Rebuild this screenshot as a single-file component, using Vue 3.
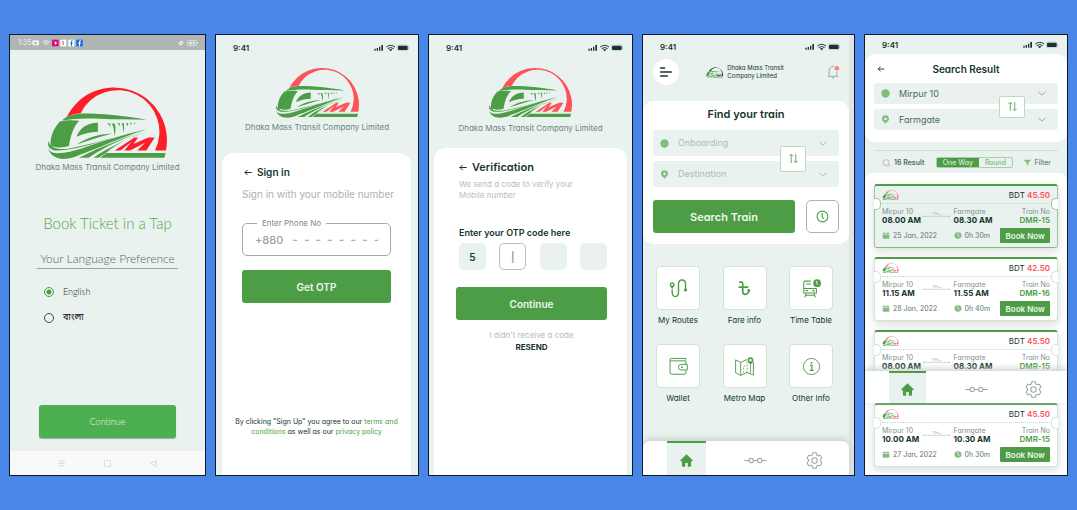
<script setup>
import { ref } from 'vue'

const language = ref('en')
const tripType = ref('one')
const otp = ref(['5', '', '', ''])

const services = [
  { label: 'My Routes', icon: 'i-route' },
  { label: 'Fare info', icon: 'i-taka' },
  { label: 'Time Table', icon: 'i-bus' },
  { label: 'Wallet', icon: 'i-wallet' },
  { label: 'Metro Map', icon: 'i-map' },
  { label: 'Other Info', icon: 'i-info' }
]

const tickets = [
  { fare: '45.50', from: '08.00 AM', to: '08.30 AM', train: 'DMR-15', date: '25 Jan, 2022', time: '0h 30m', active: true },
  { fare: '42.50', from: '11.15 AM', to: '11.55 AM', train: 'DMR-16', date: '28 Jan, 2022', time: '0h 40m' },
  { fare: '45.50', from: '08.00 AM', to: '08.30 AM', train: 'DMR-15', date: '25 Jan, 2022', time: '0h 30m' },
  { fare: '45.50', from: '10.00 AM', to: '10.30 AM', train: 'DMR-15', date: '27 Jan, 2022', time: '0h 30m' }
]
</script>

<template>
  <svg class="sprite" aria-hidden="true">
    <symbol id="logo" viewBox="144 182 358 224">
      <path fill="var(--arc)" d="M200 275A159 159 0 0 1 499 375H466A124 124 0 0 0 242 263C224 264 211 268 200 275z" />
      <g fill="var(--train)">
        <path d="M180 288C160 309 150 335 152 361C168 368 191 367 207 362C211 335 219 305 238 286C217 283 197 284 180 288z" />
        <path d="M186 285C202 270 222 264 252 264C310 264 385 272 441 283C390 282 345 283 300 280C260 277 220 279 186 285z" />
        <path d="M230 334C239 308 262 293 294 292V319C270 320 249 325 230 334z" />
        <path d="M321 294L331 294L331 306Q329 296 321 294zM335 294L345 295Q350 315 343 332Q344 303 335 294zM352 293L360 293V304Q359 296 352 293zM365 293L372 293Q375 310 371 323Q371 301 365 293zM378 293L385 293V302zM390 292L395 292V300zM402 292L406 292V298z" />
        <path d="M231 357C262 337 293 326 338 324C305 332 266 345 231 357z" />
        <path d="M146 347C141 361 147 371 165 375C225 379 330 337 440 310C350 335 255 361 210 369C180 374 150 371 146 347z" />
        <path d="M144 365C149 386 166 384 192 382C238 376 306 343 440 311C363 337 286 371 245 386C205 408 151 408 144 365z" />
        <path d="M440 313C375 338 302 364 237 397L266 397C318 362 370 340 440 313z" />
        <path d="M440 317C392 338 325 364 281 397L296 397L319 382C350 354 390 337 440 317z" />
        <path d="M320 383H498L494 397H301z" />
      </g>
      <path fill="var(--arc)" d="M345 375L404 336H415L401 356L446 336H465L440 375H413L436 352L391 375H374L395 349L362 375z" />
    </symbol>
    <symbol id="i-status" viewBox="0 0 108 24">
      <path fill="currentColor" d="M1 14h4v6H1zM8 12h4v8H8zM15 8h4v12h-4zM22 3h5v17h-5z" />
      <path fill="none" stroke="currentColor" stroke-width="3" d="M37 9Q50 -1 63 9M41 14Q50 7 59 14" />
      <path fill="currentColor" d="M45 17Q50 13 55 17L50 22z" />
      <rect x="70" y="3" width="33" height="17" rx="5" fill="none" stroke="currentColor" opacity=".5" />
      <rect x="72" y="5" width="29" height="13" rx="3" fill="currentColor" />
      <path fill="currentColor" opacity=".5" d="M104 9q4 3 0 6z" />
    </symbol>
    <symbol id="i-back" viewBox="0 0 24 20">
      <path fill="none" stroke="currentColor" stroke-width="3" stroke-linecap="round" stroke-linejoin="round" d="M22 10H3M10 3L3 10l7 7" />
    </symbol>
    <symbol id="i-chevron" viewBox="0 0 20 12">
      <path fill="none" stroke="currentColor" stroke-width="2.4" d="M1 2l9 8 9-8" />
    </symbol>
    <symbol id="i-dot" viewBox="0 0 28 28"><circle cx="14" cy="14" r="13" fill="currentColor" /></symbol>
    <symbol id="i-pin" viewBox="0 0 28 28">
      <path fill="currentColor" fill-rule="evenodd" d="M14 1a11 11 0 0 1 11 11c0 7-7 11-11 15C10 23 3 19 3 12A11 11 0 0 1 14 1zm0 7a4 4 0 1 0 0 8 4 4 0 0 0 0-8z" />
    </symbol>
    <symbol id="i-swap" viewBox="0 0 34 34">
      <path fill="none" stroke="currentColor" stroke-width="3" stroke-linejoin="round" d="M10 31V4M4 10l6-6 6 6M24 3v27M18 24l6 6 6-6" />
    </symbol>
    <symbol id="i-clock" viewBox="0 0 34 34">
      <circle cx="17" cy="17" r="14" fill="none" stroke="currentColor" stroke-width="3" />
      <path fill="none" stroke="currentColor" stroke-width="3" d="M16 8v9l4 6" />
    </symbol>
    <symbol id="i-bell" viewBox="0 0 38 42">
      <path fill="none" stroke="#93a09c" stroke-width="2.5" d="M2 34h31M6 34V18C6 9 11 5 18 5M29 34V20M14 37q4 4 8 0M18 5V1" />
      <circle cx="29" cy="10" r="7" fill="#ff7c80" />
    </symbol>
    <symbol id="i-route" viewBox="0 0 54 54">
      <path fill="currentColor" fill-rule="evenodd" d="M9 9a7 7 0 0 1 7 7c0 5-5 8-7 13-2-5-7-8-7-13a7 7 0 0 1 7-7zm0 4a3 3 0 1 0 0 6 3 3 0 0 0 0-6z" />
      <path fill="none" stroke="currentColor" stroke-width="4" d="M9 30v8c0 6 2 12 9 12s9-6 9-12V14c0-7 3-11 10-11s10 5 10 11v15" />
      <circle cx="47" cy="31" r="4.500" fill="currentColor" />
    </symbol>
    <symbol id="i-taka" viewBox="0 0 54 54">
      <path fill="none" stroke="currentColor" stroke-width="5" stroke-linecap="round" d="M14 9c6-2 8 1 8 6v22c0 8 11 8 15 3 2-3 3-7 2-9M12 23h24" />
      <circle cx="39" cy="33" r="4" fill="currentColor" />
    </symbol>
    <symbol id="i-bus" viewBox="0 0 54 54">
      <path fill="none" stroke="currentColor" stroke-width="3" d="M25 6H9q-4 0-4 5v29h36V27M5 27h36M11 14h15M12 40l-4 12M34 40l4 12M10 46h26M10 33h7M29 33h7" />
      <circle cx="43" cy="12" r="11" fill="currentColor" />
      <path fill="none" stroke="#fff" stroke-width="2.500" d="M42 5v8l4 4" />
    </symbol>
    <symbol id="i-wallet" viewBox="0 0 54 54">
      <path fill="none" stroke="currentColor" stroke-width="2.800" stroke-linejoin="round" d="M48 20v-9H7q-4 0-4-3 0-4 4-4h41v4M3 8v37q0 4 4 4h37q4 0 4-4v-7M34 21h18v16H34q-7 0-7-8t7-8z" />
      <circle cx="37" cy="29" r="2.500" fill="currentColor" />
    </symbol>
    <symbol id="i-map" viewBox="0 0 60 60">
      <path fill="none" stroke="currentColor" stroke-width="3" stroke-linejoin="round" d="M2 9l16 8 20-9M58 15v42l-20-8-20 9-16-8V9M18 17v41" />
      <path fill="none" stroke="currentColor" stroke-width="2.500" stroke-dasharray="6 4" d="M38 14v34M27 50q2-8 0-14t5-9" />
      <path fill="currentColor" fill-rule="evenodd" d="M49 1a9 9 0 0 1 9 9c0 6-6 9-9 16-3-7-9-10-9-16a9 9 0 0 1 9-9zm0 5a4 4 0 1 0 0 8 4 4 0 0 0 0-8z" />
      <path fill="none" stroke="currentColor" stroke-width="2.500" d="M49 25v27" />
    </symbol>
    <symbol id="i-info" viewBox="0 0 54 54">
      <circle cx="27" cy="27" r="23" fill="none" stroke="currentColor" stroke-width="2.600" />
      <path fill="none" stroke="currentColor" stroke-width="3.500" d="M23 24h5v14M22 38h11" />
      <circle cx="27" cy="17" r="2.500" fill="currentColor" />
    </symbol>
    <symbol id="i-home" viewBox="0 0 40 40">
      <path fill="currentColor" d="M20 1l19 18q1 3-2 3h-3v14q0 3-3 3h-7V28h-8v11H9q-3 0-3-3V22H3q-3 0-2-3z" />
    </symbol>
    <symbol id="i-line" viewBox="0 0 68 20">
      <path fill="none" stroke="currentColor" stroke-width="3" d="M1 10h14M28 10h12M53 10h14" />
      <circle cx="21.500" cy="10" r="6.500" fill="none" stroke="currentColor" stroke-width="3" />
      <circle cx="46.500" cy="10" r="6.500" fill="none" stroke="currentColor" stroke-width="3" />
    </symbol>
    <symbol id="i-gear" viewBox="2 2 20 20">
      <g fill="none" stroke="currentColor" stroke-width="1.200">
        <path d="M9.594 3.940c.09-.542.56-.94 1.110-.94h2.593c.55 0 1.020.398 1.110.94l.213 1.281c.063.374.313.686.645.87.074.04.147.083.22.127.325.196.72.257 1.075.124l1.217-.456a1.125 1.125 0 0 1 1.370.49l1.296 2.247a1.125 1.125 0 0 1-.26 1.431l-1.003.827c-.293.241-.438.613-.43.992a7.723 7.723 0 0 1 0 .255c-.008.378.137.75.43.991l1.004.827c.424.35.534.955.26 1.430l-1.298 2.247a1.125 1.125 0 0 1-1.369.491l-1.217-.456c-.355-.133-.75-.072-1.076.124a6.470 6.470 0 0 1-.22.128c-.331.183-.581.495-.644.869l-.213 1.281c-.09.543-.56.94-1.110.94h-2.594c-.55 0-1.019-.398-1.110-.94l-.213-1.281c-.062-.374-.312-.686-.644-.87a6.520 6.520 0 0 1-.22-.127c-.325-.196-.72-.257-1.076-.124l-1.217.456a1.125 1.125 0 0 1-1.369-.49l-1.297-2.247a1.125 1.125 0 0 1 .26-1.431l1.004-.827c.292-.24.437-.613.43-.991a6.932 6.932 0 0 1 0-.255c.007-.38-.138-.751-.43-.992l-1.004-.827a1.125 1.125 0 0 1-.26-1.430l1.297-2.247a1.125 1.125 0 0 1 1.370-.491l1.216.456c.356.133.751.072 1.076-.124.072-.044.146-.086.22-.128.332-.183.582-.495.644-.869l.214-1.280Z" />
        <circle cx="12" cy="12" r="3.200" />
      </g>
    </symbol>
    <symbol id="i-search" viewBox="0 0 28 24">
      <circle cx="13" cy="11" r="9.500" fill="none" stroke="currentColor" stroke-width="2" />
      <path stroke="currentColor" stroke-width="2" d="M20 18l6 5" />
    </symbol>
    <symbol id="i-filter" viewBox="0 0 22 22">
      <path fill="currentColor" d="M2 2h18q2 1 1 3l-7 7v8l-6-3v-5L1 5q-1-2 1-3z" />
    </symbol>
    <symbol id="i-cal" viewBox="0 0 24 20">
      <path fill="currentColor" d="M2 3h3V0h3v3h8V0h3v3h3v3H2zM2 8h20v9q0 3-3 3H5q-3 0-3-3z" />
    </symbol>
    <symbol id="i-time" viewBox="0 0 22 20">
      <ellipse cx="11" cy="10" rx="10" ry="9" fill="currentColor" />
      <path fill="none" stroke="#fff" stroke-width="2" d="M11 4v6l4 4" />
    </symbol>
    <symbol id="i-trip" viewBox="0 0 82 18">
      <path fill="none" stroke="#a5aead" stroke-width="1.500" d="M2 16h78M28 5l12 0 10 6h7M30 9h16" />
      <circle cx="2" cy="16" r="2" fill="#a5aead" /><circle cx="80" cy="16" r="2" fill="#a5aead" />
    </symbol>
  </svg>

  <main class="board">
    <!-- Language choice -->
    <section class="phone welcome">
      <div class="android-bar">
        <span>1:35</span>
        <svg class="bar-apps" viewBox="0 0 156 24">
          <rect x="1" y="4" width="20" height="15" rx="3" fill="#edf1ef" /><path fill="#8e9794" d="M8 8l7 4-7 4z" />
          <path fill="none" stroke="#edf1ef" stroke-width="3" d="M31 9q11-8 22 0M35 14q7-5 14 0" /><circle cx="42" cy="18" r="2" fill="#edf1ef" />
          <rect x="60" y="2" width="20" height="20" fill="#d5127a" /><path fill="#fff" d="M65 6l11 6-7 5v-6z" />
          <rect x="85" y="2" width="18" height="20" fill="#fff" /><path fill="#e9682b" d="M90 6l4 2 3 6-3 4-3-1 2-4z" /><path fill="#7b2c84" d="M90 6l3 1v4z" />
          <rect x="109" y="2" width="18" height="20" fill="#fff" /><path fill="#1b6fe0" d="M117 21v-7h-3v-3h3V8q0-4 5-4v3q-2 0-2 2v2h2v3h-2v7z" />
          <rect x="133" y="2" width="19" height="20" fill="#0f6af2" /><path fill="#fff" d="M141 22v-8h-3v-3h3V8q0-4 6-4v3q-3 0-3 2v2h3v3h-3v8z" />
        </svg>
        <svg class="bar-power" viewBox="0 0 63 24">
          <circle cx="12" cy="12" r="7" fill="#edf1ef" /><path stroke="#8e9794" stroke-width="2" d="M5 5l14 14" />
          <rect x="31" y="4" width="27" height="16" rx="4" fill="none" stroke="#edf1ef" stroke-width="2" /><path fill="#edf1ef" d="M36 8h8v8h-8zM47 8h6v8h-6zM60 9h2v6h-2z" />
        </svg>
      </div>
      <svg class="logo vivid" role="img" aria-label="Dhaka Mass Transit logo"><use href="#logo" /></svg>
      <p class="company">Dhaka Mass Transit Company Limited</p>
      <h1>Book Ticket in a Tap</h1>
      <h2>Your Language Preference</h2>
      <div class="languages">
        <label><input v-model="language" type="radio" name="language" value="en" />English</label>
        <label class="bangla"><input v-model="language" type="radio" name="language" value="bn" />বাংলা</label>
      </div>
      <button class="solid" type="button">Continue</button>
      <div class="android-nav">
        <svg viewBox="0 0 20 20"><path stroke="#ccc" stroke-width="2" d="M1 3h18M1 10h18M1 17h18" /></svg>
        <svg viewBox="0 0 20 20"><rect x="1" y="1" width="18" height="18" rx="3" fill="none" stroke="#ccc" stroke-width="2" /></svg>
        <svg viewBox="0 0 20 20"><path fill="none" stroke="#ccc" stroke-width="2" d="M18 1v18L2 10z" /></svg>
      </div>
    </section>

    <!-- Sign in -->
    <section class="phone signin">
      <div class="status"><span>9:41</span><svg><use href="#i-status" /></svg></div>
      <svg class="logo"><use href="#logo" /></svg>
      <p class="company">Dhaka Mass Transit Company Limited</p>
      <form class="sheet" @submit.prevent>
        <h2><svg><use href="#i-back" /></svg>Sign in</h2>
        <p class="hint">Sign in with your mobile number</p>
        <fieldset>
          <legend><label for="phone">Enter Phone No</label></legend>
          <span>+880</span>
          <input id="phone" type="tel" placeholder="-  -  -  -  -  -  -  -" />
        </fieldset>
        <button class="solid">Get OTP</button>
        <p class="terms">By clicking "Sign Up" you agree to our <a href="#terms">terms and conditions</a> as well as our <a href="#privacy">privacy policy</a></p>
      </form>
    </section>

    <!-- Verification -->
    <section class="phone verify">
      <div class="status"><span>9:41</span><svg><use href="#i-status" /></svg></div>
      <svg class="logo"><use href="#logo" /></svg>
      <p class="company">Dhaka Mass Transit Company Limited</p>
      <form class="sheet" @submit.prevent>
        <h2><svg><use href="#i-back" /></svg>Verification</h2>
        <p class="hint">We send a code to verify your<br />Mobile number</p>
        <label class="otp-label" for="otp0">Enter your OTP code here</label>
        <div class="otp">
          <input v-for="(digit, i) in otp" :id="'otp' + i" :key="i" v-model="otp[i]" :class="{ current: i === 1 }" :placeholder="i === 1 ? '|' : ''" :aria-label="'Digit ' + (i + 1)" maxlength="1" />
        </div>
        <button class="solid">Continue</button>
        <p class="resend">I didn’t receive a code<br /><a href="#resend">RESEND</a></p>
      </form>
    </section>

    <!-- Home -->
    <section class="phone home">
      <div class="status"><span>9:41</span><svg><use href="#i-status" /></svg></div>
      <header>
        <button class="menu" type="button" aria-label="Menu"><svg viewBox="0 0 36 30"><path stroke="currentColor" stroke-width="4" stroke-linecap="round" d="M2 3h12M2 15h32M2 27h20" /></svg></button>
        <div class="brand"><svg class="logo"><use href="#logo" /></svg><span>Dhaka Mass Transit<br />Company Limited</span></div>
        <button class="bell" type="button" aria-label="Notifications"><svg><use href="#i-bell" /></svg></button>
      </header>
      <form class="finder" @submit.prevent>
        <h2>Find your train</h2>
        <div class="stops">
          <div class="stop"><svg class="mark"><use href="#i-dot" /></svg><select aria-label="Onboarding"><option>Onboarding</option></select><svg class="chev"><use href="#i-chevron" /></svg></div>
          <div class="stop"><svg class="mark"><use href="#i-pin" /></svg><select aria-label="Destination"><option>Destination</option></select><svg class="chev"><use href="#i-chevron" /></svg></div>
          <button class="swap" type="button" aria-label="Swap stations"><svg><use href="#i-swap" /></svg></button>
        </div>
        <div class="actions">
          <button class="solid">Search Train</button>
          <button class="recent" type="button" aria-label="Recent"><svg><use href="#i-clock" /></svg></button>
        </div>
      </form>
      <div class="services">
        <a v-for="s in services" :key="s.label" href="#service"><span class="tile"><svg><use :href="'#' + s.icon" /></svg></span>{{ s.label }}</a>
      </div>
      <nav class="tabs">
        <a class="on" href="#home" aria-label="Home"><svg class="t-home"><use href="#i-home" /></svg></a>
        <a href="#trips" aria-label="Trips"><svg class="t-line"><use href="#i-line" /></svg></a>
        <a href="#settings" aria-label="Settings"><svg class="t-gear"><use href="#i-gear" /></svg></a>
      </nav>
    </section>

    <!-- Search result -->
    <section class="phone results">
      <div class="status"><span>9:41</span><svg><use href="#i-status" /></svg></div>
      <form class="finder" @submit.prevent>
        <div class="title"><svg><use href="#i-back" /></svg><h2>Search Result</h2></div>
        <div class="stops">
          <div class="stop"><svg class="mark"><use href="#i-dot" /></svg><select aria-label="From"><option>Mirpur 10</option></select><svg class="chev"><use href="#i-chevron" /></svg></div>
          <div class="stop"><svg class="mark"><use href="#i-pin" /></svg><select aria-label="To"><option>Farmgate</option></select><svg class="chev"><use href="#i-chevron" /></svg></div>
          <button class="swap" type="button" aria-label="Swap stations"><svg><use href="#i-swap" /></svg></button>
        </div>
      </form>
      <div class="filters">
        <span class="count"><svg><use href="#i-search" /></svg>16 Result</span>
        <span class="toggle">
          <button type="button" :class="{ on: tripType === 'one' }" @click="tripType = 'one'">One Way</button>
          <button type="button" :class="{ on: tripType === 'round' }" @click="tripType = 'round'">Round</button>
        </span>
        <button class="filter" type="button"><svg><use href="#i-filter" /></svg>Filter</button>
      </div>
      <div class="list">
        <article v-for="(t, i) in tickets" :key="i" class="ticket" :class="{ active: t.active }">
          <div class="fare"><svg class="logo"><use href="#logo" /></svg><span>BDT <b>{{ t.fare }}</b></span></div>
          <div class="trip">
            <div>Mirpur 10<strong>{{ t.from }}</strong></div>
            <svg><use href="#i-trip" /></svg>
            <div>Farmgate<strong>{{ t.to }}</strong></div>
            <div class="train">Train No<strong>{{ t.train }}</strong></div>
          </div>
          <div class="book">
            <span><svg><use href="#i-cal" /></svg>{{ t.date }}</span>
            <span><svg><use href="#i-time" /></svg>{{ t.time }}</span>
            <button type="button">Book Now</button>
          </div>
        </article>
      </div>
      <nav class="tabs">
        <a class="on" href="#home" aria-label="Home"><svg class="t-home"><use href="#i-home" /></svg></a>
        <a href="#trips" aria-label="Trips"><svg class="t-line"><use href="#i-line" /></svg></a>
        <a href="#settings" aria-label="Settings"><svg class="t-gear"><use href="#i-gear" /></svg></a>
      </nav>
    </section>
  </main>
</template>

<style>
body { margin: 0; background: #4a86e8; }
</style>

<style scoped>
.sprite { display: none; }
.board {
  --green: #4d9d47;
  --soft: #83bd7e;
  --mist: #e9f2ef;
  --ink: #16352e;
  --arc: #ff515a;
  --train: #4d9d47;
  box-sizing: border-box;
  min-height: 100vh;
  padding: 34px 9px;
  display: grid;
  grid-template-columns: 197fr 204fr 205fr 213fr 204fr;
  gap: 9px;
  color: var(--ink);
  font-family: Inter, "Noto Sans", "Liberation Sans", sans-serif;
  font-feature-settings: "cv11", "ss03";
  font-size: 9px;
  line-height: 12px;
}
.board * { box-sizing: border-box; }
h1, h2, p { margin: 0; font-weight: 400; }
svg { display: block; flex: none; }
a { color: var(--green); text-decoration: none; }
button, input, select { font: inherit; font-feature-settings: inherit; color: inherit; margin: 0; padding: 0; border: 0; background: none; min-width: 0; outline: 0; }
.phone {
  position: relative;
  display: flex;
  flex-direction: column;
  min-width: 0;
  overflow: hidden;
  border: 1px solid #081c26;
  background: var(--mist);
}
.status { flex: none; height: 26px; padding: 0 8px 0 17px; display: flex; justify-content: space-between; align-items: center; font-size: 8px; font-weight: 600; }
.status svg { width: 36px; height: 8px; }
.logo { width: 83px; height: 52px; align-self: center; }
.company { text-align: center; white-space: nowrap; font-size: 8px; color: #6c857e; }
.solid { height: 33px; border-radius: 3px; background: var(--green); color: #eef7ee; font-size: 10px; font-weight: 600; text-align: center; }

.vivid { --arc: #ff1d29; width: 119px; height: 75px; margin-top: 36px; }
.android-bar { flex: none; height: 15px; padding: 0 7px 0 8px; display: flex; align-items: center; background: #b0b6b4; color: #edf1ef; font-size: 7px; }
.bar-apps { width: 52px; height: 8px; margin-left: 1px; }
.bar-power { width: 21px; height: 8px; margin-left: auto; }
.welcome h1 { margin-top: 41px; text-align: center; font: 300 15px/18px Lato, sans-serif; color: #55a64f; }
.welcome h2 { margin: 18px auto 0; border-bottom: 1px solid #93a5a0; font: 300 12px/18px Lato, sans-serif; color: #4c6a62; padding: 0 3px; }
.languages { margin: 16px 34px 0; display: grid; gap: 12px; }
.languages label { display: flex; align-items: center; gap: 9px; font: 300 9px/14px Lato, sans-serif; }
.languages .bangla { font-family: "Noto Sans Bengali", "Noto Sans", sans-serif; font-weight: 400; color: #111; }
.languages input { appearance: none; width: 10px; height: 10px; border: 1px solid #444c49; border-radius: 50%; }
.languages input:checked { border-color: var(--green); background: radial-gradient(circle, #4d9d47 2px, transparent 3px); }
.welcome .solid { margin: auto 29px 13px; background: #4caf50; font: 300 9px/12px Lato, sans-serif; box-shadow: 0 1px 1px #9eaaa5; }
.android-nav { height: 24px; padding: 0 48px; display: flex; justify-content: space-between; align-items: center; background: #f9f9f9; }
.android-nav svg { width: 7px; height: 7px; }

.signin > .logo, .verify > .logo { flex: none; margin-top: 6px; }
.signin .company, .verify .company { margin-top: 2px; }
.verify .company { margin-top: 3px; }
.sheet { flex: 1; display: flex; flex-direction: column; background: #fff; border-radius: 12px 12px 0 0; }
.sheet h2 { display: flex; align-items: center; gap: 5px; font-size: 11px; line-height: 14px; font-weight: 600; }
.sheet h2 svg { width: 8px; height: 7px; }
.hint { color: #a9b3b0; }
.signin .sheet { margin: 20px 7px 0 6px; padding: 12px 20px 38px; }
.signin h2 { margin-left: 2px; font-size: 10px; }
.signin .hint { margin-top: 9px; font-size: 10px; white-space: nowrap; }
fieldset { margin: 18px 0 0; padding: 0 12px; height: 38px; min-width: 0; border: 1px solid #9fadaa; border-radius: 5px; display: flex; align-items: center; color: #98a5a1; }
legend { margin-left: 2px; padding: 0 5px; font-size: 8px; line-height: 10px; color: #7c8d88; }
fieldset span { font-size: 11px; font-weight: 500; margin: 4px 9px 0 0; }
fieldset input { width: 100%; margin-top: 4px; font-size: 12px; font-weight: 600; white-space: pre; }
fieldset input::placeholder { color: #a9b3b0; opacity: 1; }
.signin .solid { margin-top: 14px; }
.terms { margin: auto -12px 0; text-align: center; font-size: 7px; line-height: 10px; }

.verify .sheet { margin: 14px 5px 0; padding: 12px 20px 0 22px; }
.verify h2, .verify .hint, .otp-label { margin-left: 3px; }
.verify .hint { margin-top: 5px; font-size: 8px; line-height: 11px; color: #b8c0bd; }
.otp-label { margin-top: 26px; font-weight: 600; }
.otp { margin: 4px 0 17px 3px; display: grid; grid-template-columns: repeat(4, 27px); justify-content: space-between; }
.otp input { height: 27px; border-radius: 5px; background: var(--mist); text-align: center; font-size: 10px; font-weight: 600; }
.otp .current { background: #fff; border: 1px solid #b5bfbc; }
.otp .current::placeholder { color: #8c9995; opacity: 1; }
.resend { margin-top: 9px; text-align: center; font-size: 8px; color: #b3bcb9; }
.resend a { font-weight: 700; color: var(--ink); }

.home { padding-right: 5px; background: linear-gradient(to left, #e0e4e2 5px, var(--mist) 5px); }
.home .status { height: 24px; }
header { display: flex; justify-content: space-between; align-items: center; padding: 0 9px 0 10px; }
.menu { width: 26px; height: 26px; border-radius: 50%; background: #fff; display: grid; place-items: center; }
.menu svg { width: 12px; height: 10px; }
.brand { display: flex; align-items: center; gap: 4px; margin-right: 16px; font-size: 6px; line-height: 8px; }
.brand .logo { --arc: #16352e; width: 17px; height: 11px; }
.bell svg { width: 13px; height: 14px; }
.finder { background: #fff; }
.home .finder { margin-top: 16px; padding: 6px 10px 11px; border-radius: 10px; }
.finder h2 { text-align: center; font-size: 10px; line-height: 14px; font-weight: 600; }
.home h2, .actions .solid { font-size: 11px; }
.stops { position: relative; display: grid; gap: 5px; margin-top: 9px; }
.stop { position: relative; height: 26px; display: flex; align-items: center; gap: 9px; padding: 0 12px 0 7px; border-radius: 3px; background: var(--mist); color: #b0bbb7; }
.stop .mark { width: 9px; height: 9px; color: var(--soft); }
.stop select { flex: 1; appearance: none; }
.chev { width: 8px; height: 5px; }
.swap { position: absolute; right: 33px; top: 50%; width: 26px; height: 26px; transform: translateY(-50%); display: grid; place-items: center; border: 1px solid #b9dbb6; border-radius: 2px; background: #fff; color: #66ad61; }
.swap svg { width: 11px; height: 11px; }
.actions { display: grid; grid-template-columns: 1fr 33px; gap: 11px; margin-top: 13px; }
.recent { display: grid; place-items: center; border: 1px solid #aab5b1; border-radius: 5px; color: var(--green); }
.recent svg { width: 13px; height: 13px; }
.services { margin: 22px 16px 0 13px; display: grid; grid-template-columns: repeat(3, 44px); justify-content: space-between; row-gap: 18px; }
.services a { display: flex; flex-direction: column; align-items: center; gap: 4px; font-size: 8px; white-space: nowrap; color: var(--ink); }
.tile { width: 44px; height: 44px; display: grid; place-items: center; background: #fff; border: 1px solid #d0e5ce; border-radius: 4px; color: var(--green); }
.tile svg { width: 19px; height: 19px; }
.tabs { display: grid; grid-template-columns: 24fr 38fr 62fr 56fr 24fr; height: 34px; flex: none; background: #fff; box-shadow: 0 -2px 7px #c4cfcb; color: #98a5a1; }
.home .tabs { margin-top: auto; border-radius: 7px 7px 0 0; }
.tabs a { display: grid; place-items: center; padding-top: 4px; color: inherit; }
.tabs .on { grid-column: 2; padding-top: 2px; border-top: 2px solid var(--green); background: var(--mist); color: var(--green); }
.t-home { width: 13px; height: 13px; }
.t-line { width: 23px; height: 7px; margin-left: 38px; }
.t-gear { width: 17px; height: 17px; margin-left: 36px; }

.results .status { height: 19px; }
.results .finder { padding: 8px 9px 12px; border-radius: 10px; }
.title { display: grid; grid-template-columns: 8px 1fr 8px; align-items: center; padding: 0 3px; }
.title svg { width: 8px; height: 6px; }
.results .stops { margin-top: 7px; }
.results .stop { height: 21px; color: #4c6a62; }
.results .chev { color: #98a5a1; }
.results .swap { height: 22px; }
.filters { margin: 8px 9px 5px; border-top: 1px solid #cfe4cd; padding: 6px 7px 0 8px; display: flex; align-items: center; justify-content: space-between; font-size: 7px; line-height: 9px; white-space: nowrap; }
.filters svg { width: 9px; height: 8px; }
.count, .filter { display: flex; align-items: center; gap: 3px; }
.count { color: #4c6a62; font-weight: 600; }
.count svg { color: #98a5a1; }
.filter svg { width: 7px; height: 7px; color: var(--soft); }
.filter { color: #4c6a62; }
.toggle { display: flex; height: 11px; border: 1px solid #a8d0a5; border-radius: 2px; }
.toggle button { padding: 0 6px; color: #66ad61; }
.toggle .on { background: var(--green); color: #e7f4e6; }
.list { flex: 1; background: #fff; border-radius: 8px 8px 0 0; padding: 11px 9px 8px; display: flex; flex-direction: column; gap: 9px; }
.ticket { position: relative; padding: 0 7px 4px; background: #fff; border: 1px solid #d3e5d1; border-top: 2px solid var(--green); border-radius: 3px; box-shadow: 0 3px 8px #d6dcda; font-size: 7px; color: #7f908a; }
.ticket.active { background: var(--mist); border-color: var(--green) #9bc898 #83bd7e; }
.ticket::before, .ticket::after { content: ""; position: absolute; top: 12px; width: 6px; height: 10px; border: 1px solid #d3e5d1; background: #fff; }
.ticket::before { left: -1px; border-left: 0; border-radius: 0 5px 5px 0; }
.ticket::after { right: -1px; border-right: 0; border-radius: 5px 0 0 5px; }
.ticket.active::before, .ticket.active::after { border-color: #9bc898; }
.fare { display: flex; justify-content: space-between; align-items: center; height: 18px; border-bottom: 1px dotted #c5d3cf; font-size: 8px; color: var(--ink); }
.fare .logo { width: 17px; height: 10px; }
.fare b { color: var(--arc); font-weight: 600; }
.trip { display: grid; grid-template-columns: 41fr 31fr 47fr 50fr; padding: 4px 0 3px; line-height: 8px; white-space: nowrap; }
.trip svg { width: 27px; height: 6px; margin-top: 3px; }
.trip strong { display: block; line-height: 9px; font-size: 8px; font-weight: 700; color: var(--ink); }
.trip .train { text-align: right; }
.trip .train strong { color: var(--green); font-weight: 600; }
.book { display: grid; grid-template-columns: 72fr 47fr 50fr; align-items: center; white-space: nowrap; }
.book span { display: flex; align-items: center; gap: 3px; color: #5d766f; }
.book svg { width: 8px; height: 7px; color: var(--soft); }
.book button { height: 15px; border-radius: 1px; background: var(--green); color: #eef7ee; font-size: 8px; line-height: 10px; font-weight: 600; }
.results .tabs { position: absolute; left: 0; right: 0; bottom: 72px; height: 32px; }
</style>
